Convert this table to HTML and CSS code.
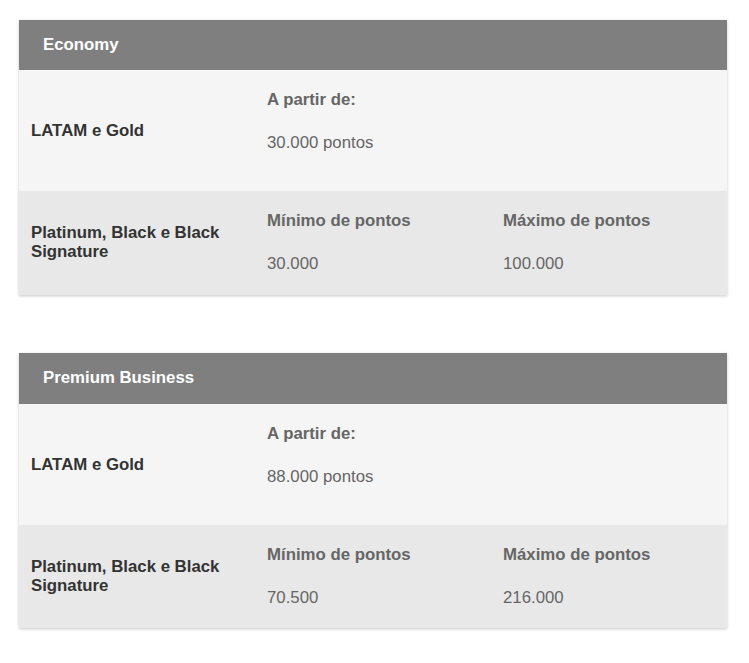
FILE: index.html
```html
<!DOCTYPE html>
<html lang="pt-BR">
<head>
<meta charset="utf-8">
<title>Pontos</title>
<link rel="stylesheet" href="styles.css">
</head>
<body>
<div class="card">
  <div class="card-header">Economy</div>
  <div class="row row-light">
    <div class="cell label">LATAM e Gold</div>
    <div class="cell">
      <div class="title">A partir de:</div>
      <div class="value">30.000 pontos</div>
    </div>
    <div class="cell"></div>
  </div>
  <div class="row row-dark">
    <div class="cell label">Platinum, Black e Black Signature</div>
    <div class="cell">
      <div class="title">Mínimo de pontos</div>
      <div class="value">30.000</div>
    </div>
    <div class="cell">
      <div class="title">Máximo de pontos</div>
      <div class="value">100.000</div>
    </div>
  </div>
</div>

<div class="card">
  <div class="card-header">Premium Business</div>
  <div class="row row-light">
    <div class="cell label">LATAM e Gold</div>
    <div class="cell">
      <div class="title">A partir de:</div>
      <div class="value">88.000 pontos</div>
    </div>
    <div class="cell"></div>
  </div>
  <div class="row row-dark">
    <div class="cell label">Platinum, Black e Black Signature</div>
    <div class="cell">
      <div class="title">Mínimo de pontos</div>
      <div class="value">70.500</div>
    </div>
    <div class="cell">
      <div class="title">Máximo de pontos</div>
      <div class="value">216.000</div>
    </div>
  </div>
</div>
</body>
</html>
```

FILE: styles.css
```css
html, body {
  margin: 0;
  padding: 0;
  background: #ffffff;
}
body {
  padding: 19.5px 22px 0 19px;
  font-family: "Liberation Sans", Arial, sans-serif;
  font-size: 16.8px;
  line-height: 19px;
}
.card {
  box-shadow: 0 1px 3px rgba(0, 0, 0, 0.22);
  margin-bottom: 58.5px;
}
.card-header {
  background: #7f7f7f;
  color: #ffffff;
  font-weight: bold;
  height: 50.5px;
  line-height: 50.5px;
  padding-left: 24px;
}
.row {
  display: grid;
  grid-template-columns: 236px 236px 236px;
}
.row-light {
  background: #f5f5f5;
  padding: 20px 0 39px;
}
.row-dark {
  background: #e8e8e8;
  padding: 20px 0 21.5px;
}
.cell {
  padding: 0 12px;
}
.label {
  display: flex;
  align-items: center;
  font-weight: bold;
  color: #333333;
  padding-right: 20px;
}
.row-light .label {
  margin-bottom: -19px;
}
.title {
  font-weight: bold;
  color: #666666;
  margin-bottom: 24px;
}
.value {
  color: #666666;
}
```
